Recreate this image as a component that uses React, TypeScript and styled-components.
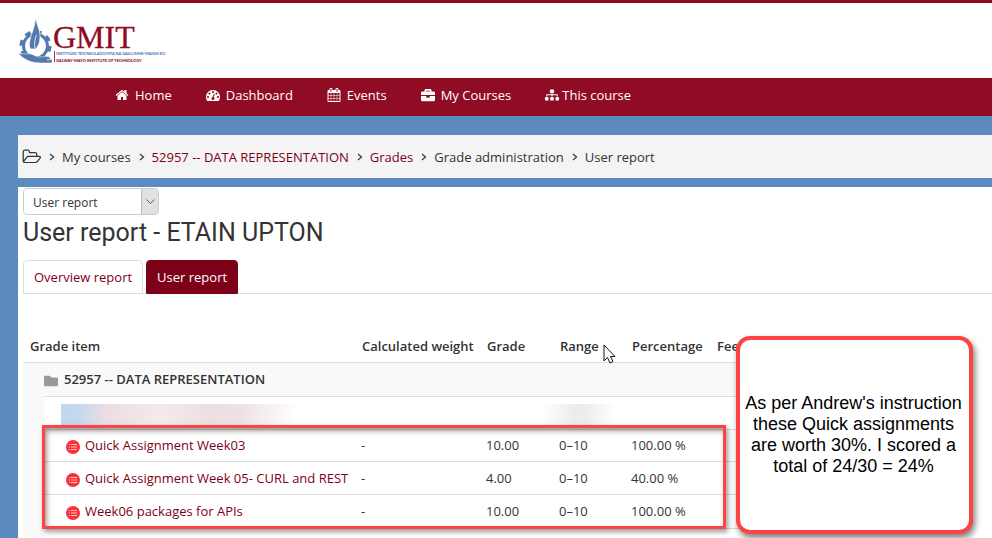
import React from "react";
import styled, { createGlobalStyle } from "styled-components";
import { FaBriefcase, FaSitemap, FaFolder } from "react-icons/fa";

const GlobalStyle = createGlobalStyle`
  * { box-sizing: border-box; }
  body {
    margin: 0;
    background: #5c8bc0;
    color: #333;
    font-family: "Open Sans", "Noto Sans", sans-serif;
    font-size: 13px;
    line-height: 20px;
  }
`;

const Page = styled.div`
  min-height: 100vh;
  display: flex;
  flex-direction: column;
  overflow: hidden;
`;

const Header = styled.header`
  height: 78px;
  padding: 15px 18px 0;
  background: #fff;
  border-top: 3px solid #900b24;
`;

const Logo = styled.svg`
  display: block;
  width: 150px;
  height: 48px;
`;

const NavBar = styled.nav`
  height: 38px;
  padding: 0 115px 4px;
  display: flex;
  align-items: center;
  gap: 34px;
  background: #900b24;
`;

const NavLink = styled.a<{ $tight?: boolean }>`
  display: flex;
  align-items: center;
  gap: ${(p) => (p.$tight ? 3 : 6)}px;
  color: #fff;
  text-decoration: none;
  svg { width: 14px; height: 14px; }
`;

const Main = styled.main`
  flex: 1;
  display: flex;
  flex-direction: column;
  gap: 9px;
  padding: 19px 0 0 18px;
`;

const Crumbs = styled.nav`
  height: 43px;
  padding: 0 4px;
  display: flex;
  align-items: center;
  background: #f4f4f4;
  & > svg { width: 19px; height: 16px; fill: #333; }
`;

const CrumbList = styled.ol`
  display: flex;
  margin: 0;
  padding: 0;
  list-style: none;
`;

const Crumb = styled.li`
  display: flex;
  align-items: center;
  svg { margin: 0 7px 0 8px; }
`;

const CrumbLink = styled.a`
  color: #7d0019;
  text-decoration: none;
`;

const Content = styled.section`
  flex: 1;
  padding: 1px 0 0 5px;
  background: #fff;
`;

const SelectBox = styled.div`
  position: relative;
  width: 136px;
  height: 27px;
`;

const Select = styled.select`
  appearance: none;
  width: 100%;
  height: 100%;
  padding: 2px 24px 0 9px;
  border: 1px solid #ccc;
  border-radius: 4px;
  background: #fff;
  color: #333;
  font: 12px "Open Sans", sans-serif;
`;

const SelectArrow = styled.span`
  position: absolute;
  inset: 1px 1px 1px auto;
  width: 17px;
  display: flex;
  align-items: center;
  justify-content: center;
  border-left: 1px solid #bbb;
  border-radius: 0 3px 3px 0;
  background: #e1e1e1;
  pointer-events: none;
`;

const Title = styled.h2`
  margin: 3px 0 12px;
  font: 400 25px/30px Roboto, sans-serif;
  color: #333;
`;

const Tabs = styled.nav`
  display: flex;
  gap: 3px;
  height: 34px;
  border-bottom: 1px solid #ddd;
`;

const Tab = styled.a<{ $active?: boolean }>`
  height: 34px;
  padding: 6px 10px;
  border: 1px solid ${(p) => (p.$active ? "#7d0019" : "#ddd")};
  border-radius: 4px 4px 0 0;
  background: ${(p) => (p.$active ? "#7d0019" : "#fff")};
  color: ${(p) => (p.$active ? "#fff" : "#7d0019")};
  text-decoration: none;
`;

const Report = styled.div`
  position: relative;
  margin: 36px 24px 0 0;
`;

const Grades = styled.table`
  width: 100%;
  table-layout: fixed;
  border-collapse: collapse;
  th, td {
    padding: 0 7px;
    text-align: left;
    white-space: nowrap;
    border-bottom: 1px solid #ddd;
  }
  thead th { height: 32px; padding-left: 8px; font-weight: 600; }
  thead th:first-child { padding-left: 7px; }
`;

const Col = styled.col<{ $w?: number }>`
  width: ${(p) => (p.$w ? `${p.$w}px` : "auto")};
`;

const Row = styled.tr<{ $h: number }>`
  height: ${(p) => p.$h}px;
`;

const Indent = styled.td`
  background: #f9f9f9;
  && { border-bottom: 0; }
`;

const Footer = styled.td`
  && { border-bottom: 0; }
`;

const Category = styled.th`
  background: #f9f9f9;
  font-weight: 600;
  && { padding-left: 0; }
  svg { width: 14px; height: 14px; margin-right: 6px; vertical-align: -4px; fill: #999; }
`;

const ItemCell = styled.th`
  font-weight: 400;
  && { padding-left: 22px; }
`;

const ItemLink = styled.a`
  color: #7d0019;
  text-decoration: none;
  svg { width: 14px; height: 14px; margin-right: 5px; vertical-align: -4px; }
`;

const Redacted = styled.div<{ $grey?: boolean }>`
  height: 24px;
  margin: ${(p) => (p.$grey ? "6px 0 0 -12px" : "6px 0 0 17px")};
  width: ${(p) => (p.$grey ? 76 : 236)}px;
  background: ${(p) =>
    p.$grey
      ? "linear-gradient(90deg, #fff, #ececec 45%, #ececec 60%, #fff)"
      : "linear-gradient(90deg, #c0d7f0, #c3d8ef 7%, #ebdde2 19%, #f4eaec 42%, #ecdfe2 62%, #ede1e5 76%, #fff)"};
`;

const BlankCell = styled.td`
  && { padding: 0; overflow: visible; }
`;

const Highlight = styled.div`
  position: absolute;
  left: 19px;
  top: 95px;
  width: 684px;
  height: 104px;
  border: 3px solid #ff4242;
  box-shadow: 2px 3px 5px rgba(0, 0, 0, 0.4), inset 2px 3px 5px rgba(0, 0, 0, 0.4);
  pointer-events: none;
`;

const Callout = styled.aside`
  position: absolute;
  left: 713px;
  top: 6px;
  width: 237px;
  height: 198px;
  padding: 0 5px 0 3px;
  display: flex;
  align-items: center;
  justify-content: center;
  border: 4px solid #ff4242;
  border-radius: 14px;
  background: #fff;
  box-shadow: 2px 4px 6px rgba(0, 0, 0, 0.5);
  color: #000;
  font: 18px/21px "Liberation Sans", Arial, sans-serif;
  text-align: center;
`;

const Pointer = styled.svg`
  position: absolute;
  left: 580px;
  top: 14px;
  width: 13px;
  height: 20px;
`;

const Icon = ({ d, box = "0 0 1792 1792" }: { d: string; box?: string }) => (
  <svg viewBox={box} fill="currentColor" aria-hidden="true">
    <path d={d} />
  </svg>
);

const HOME =
  "M1472 992v480q0 26-19 45t-45 19h-384v-384h-256v384h-384q-26 0-45-19t-19-45v-480q0-1 .5-3t.5-3l575-474 575 474q1 2 1 6zm223-69l-62 74q-8 9-21 11h-3q-13 0-21-7l-692-577-692 577q-12 8-24 7-13-2-21-11l-62-74q-8-10-7-23.5t11-21.5l719-599q32-26 76-26t76 26l244 204v-195q0-14 9-23t23-9h192q14 0 23 9t9 23v408l219 182q10 8 11 21.5t-7 23.5z";
const DASHBOARD =
  "M384 1152q0-53-37.500-90.500t-90.500-37.500-90.500 37.500-37.500 90.500 37.500 90.500 90.500 37.500 90.500-37.500 37.500-90.500zm192-448q0-53-37.500-90.500t-90.500-37.500-90.500 37.500-37.500 90.500 37.500 90.500 90.500 37.500 90.500-37.500 37.500-90.500zm428 481l101-382q6-26-7.500-48.500t-38.500-29.500-48 6.500-30 39.500l-101 382q-60 5-107 43.500t-63 98.500q-20 77 20 146t117 89 146-20 89-117q16-60-6-117t-72-91zm660-33q0-53-37.500-90.500t-90.500-37.500-90.500 37.500-37.500 90.500 37.500 90.500 90.500 37.500 90.500-37.500 37.500-90.500zm-640-640q0-53-37.500-90.500t-90.500-37.500-90.500 37.500-37.500 90.500 37.500 90.500 90.500 37.500 90.500-37.500 37.500-90.500zm448 192q0-53-37.500-90.500t-90.500-37.500-90.500 37.500-37.500 90.500 37.500 90.500 90.500 37.500 90.500-37.500 37.500-90.500zm320 448q0 261-141 483-19 29-54 29h-1402q-35 0-54-29-141-221-141-483 0-182 71-348t191-286 286-191 348-71 348 71 286 191 191 286 71 348z";
const CALENDAR =
  "M192 1664h288v-288h-288v288zm352 0h320v-288h-320v288zm-352-352h288v-320h-288v320zm352 0h320v-320h-320v320zm-352-384h288v-288h-288v288zm736 736h320v-288h-320v288zm-384-736h320v-288h-320v288zm768 736h288v-288h-288v288zm-384-352h320v-320h-320v320zm-352-864v-288q0-13-9.500-22.500t-22.500-9.500h-64q-13 0-22.500 9.500t-9.500 22.500v288q0 13 9.500 22.500t22.500 9.500h64q13 0 22.500-9.500t9.500-22.500zm736 864h288v-320h-288v320zm-384-384h320v-288h-320v288zm384 0h288v-288h-288v288zm32-480v-288q0-13-9.500-22.500t-22.500-9.500h-64q-13 0-22.500 9.500t-9.500 22.500v288q0 13 9.500 22.500t22.500 9.500h64q13 0 22.500-9.500t9.500-22.500zm384-64v1280q0 52-38 90t-90 38h-1408q-52 0-90-38t-38-90v-1280q0-52 38-90t90-38h128v-96q0-66 47-113t113-47h64q66 0 113 47t47 113v96h384v-96q0-66 47-113t113-47h64q66 0 113 47t47 113v96h128q52 0 90 38t38 90z";
const FOLDER_OPEN =
  "M1845 931q0-35-53-35h-1088q-40 0-85.500 21.500t-71.500 52.500l-294 363q-18 24-18 40 0 35 53 35h1088q40 0 86-22t71-53l294-363q18-22 18-39zm-1141-163h768v-160q0-40-28-68t-68-28h-576q-40 0-68-28t-28-68v-64q0-40-28-68t-68-28h-320q-40 0-68 28t-28 68v853l256-315q44-53 116-87.500t140-34.500zm1269 163q0 62-46 120l-295 363q-43 53-116 87.500t-140 34.500h-1088q-92 0-158-66t-66-158v-960q0-92 66-158t158-66h320q92 0 158 66t66 158v32h544q92 0 158 66t66 158v160h192q54 0 99 24.500t67 70.500q15 32 15 68z";

const Chevron = () => (
  <svg width="6" height="8" viewBox="0 0 6 8" fill="none" stroke="#444" strokeWidth="1.4" aria-hidden="true">
    <path d="M1 1l3.500 3L1 7" />
  </svg>
);

const QuizIcon = () => (
  <svg viewBox="0 0 14 14" aria-hidden="true">
    <circle cx="7" cy="7" r="7" fill="#f9313a" />
    <path d="M3 4.500h1M5 4.500h6M3 7h1M5 7h6M3 9.500h1M5 9.500h6" stroke="#ffc4c6" />
  </svg>
);

const GmitLogo = () => (
  <Logo viewBox="0 0 150 48" role="img" aria-label="GMIT">
    <circle cx="17.500" cy="28" r="14.200" fill="none" stroke="#527aae" strokeWidth="3.600" strokeDasharray="5.600 5.550" />
    <circle cx="17.500" cy="28" r="12" fill="#fff" stroke="#527aae" strokeWidth="3" />
    <path d="M12 31C9 22 16 15 17.500 0c2 8 5 13 4.500 20 0 5-2 8-4 11z" fill="#527aae" stroke="#fff" strokeWidth=".8" />
    <path d="M17 30c-1-5 0-9 1.500-13" fill="none" stroke="#fff" strokeWidth=".8" />
    <path d="M0 35c5 2 9 0 13 1s5 3 8 3c4 0 8-1 10 0 3 1 1 3-2 3l5-1v4H23c-9 0-17-3-23-10z" fill="#527aae" stroke="#fff" strokeWidth=".5" />
    <text x="35" y="30" fill="#900b24" stroke="#900b24" strokeWidth=".3" fontFamily="Liberation Serif, serif" fontSize="32">GMIT</text>
    <path d="M36.500 33v11" stroke="#900b24" strokeWidth=".8" />
    <text x="38" y="37" fill="#3e72ad" fontFamily="Lato, sans-serif" fontSize="4" fontWeight="700">INSTITIÚID TEICNEOLAÍOCHTA NA GAILLIMHE-MAIGH EO</text>
    <text x="38" y="44" fill="#900b24" fontFamily="Lato, sans-serif" fontSize="4" fontWeight="900">GALWAY-MAYO INSTITUTE OF TECHNOLOGY</text>
  </Logo>
);

const crumbs = [
  { label: "My courses" },
  { label: "52957 -- DATA REPRESENTATION", link: true },
  { label: "Grades", link: true },
  { label: "Grade administration" },
  { label: "User report" },
];

const items = [
  { name: "Quick Assignment Week03", grade: "10.00", pct: "100.00 %", h: 32 },
  { name: "Quick Assignment Week 05- CURL and REST", grade: "4.00", pct: "40.00 %", h: 33 },
  { name: "Week06 packages for APIs", grade: "10.00", pct: "100.00 %", h: 34 },
];

export default function App() {
  return (
    <Page>
      <GlobalStyle />
      <Header>
        <GmitLogo />
      </Header>
      <NavBar aria-label="Main">
        <NavLink href="#home"><Icon d={HOME} />Home</NavLink>
        <NavLink href="#dashboard"><Icon d={DASHBOARD} />Dashboard</NavLink>
        <NavLink href="#events"><Icon d={CALENDAR} box="0 0 1792 1792" />Events</NavLink>
        <NavLink href="#courses"><FaBriefcase />My Courses</NavLink>
        <NavLink href="#course" $tight><FaSitemap />This course</NavLink>
      </NavBar>
      <Main>
        <Crumbs aria-label="Breadcrumb">
          <Icon d={FOLDER_OPEN} box="0 100 1973 1600" />
          <CrumbList>
            {crumbs.map((c) => (
              <Crumb key={c.label}>
                <Chevron />
                {c.link ? <CrumbLink href="#crumb">{c.label}</CrumbLink> : c.label}
              </Crumb>
            ))}
          </CrumbList>
        </Crumbs>
        <Content>
          <SelectBox>
            <Select aria-label="Report type" defaultValue="User report">
              <option>User report</option>
              <option>Overview report</option>
            </Select>
            <SelectArrow>
              <svg width="9" height="6" viewBox="0 0 9 6" fill="none" stroke="#555" aria-hidden="true">
                <path d="M.5.5l4 4 4-4" />
              </svg>
            </SelectArrow>
          </SelectBox>
          <Title>User report - ETAIN UPTON</Title>
          <Tabs aria-label="Reports">
            <Tab href="#overview">Overview report</Tab>
            <Tab href="#user" $active aria-current="page">User report</Tab>
          </Tabs>
          <Report>
            <Grades>
              <colgroup>
                <Col $w={21} />
                <Col $w={310} />
                <Col $w={125} />
                <Col $w={73} />
                <Col $w={72} />
                <Col $w={85} />
                <Col />
              </colgroup>
              <thead>
                <tr>
                  <th colSpan={2} scope="col">Grade item</th>
                  <th scope="col">Calculated weight</th>
                  <th scope="col">Grade</th>
                  <th scope="col">Range</th>
                  <th scope="col">Percentage</th>
                  <th scope="col">Feedback</th>
                </tr>
              </thead>
              <tbody>
                <Row $h={34}>
                  <Indent rowSpan={6} />
                  <Category colSpan={6} scope="colgroup"><FaFolder />52957 -- DATA REPRESENTATION</Category>
                </Row>
                <Row $h={33}>
                  <BlankCell colSpan={3}><Redacted /></BlankCell>
                  <BlankCell colSpan={3}><Redacted $grey /></BlankCell>
                </Row>
                {items.map((item) => (
                  <Row key={item.name} $h={item.h}>
                    <ItemCell scope="row">
                      <ItemLink href="#item"><QuizIcon />{item.name}</ItemLink>
                    </ItemCell>
                    <td>-</td>
                    <td>{item.grade}</td>
                    <td>0–10</td>
                    <td>{item.pct}</td>
                    <td />
                  </Row>
                ))}
                <Row $h={9}>
                  <Footer colSpan={6} />
                </Row>
              </tbody>
            </Grades>
            <Highlight />
            <Pointer viewBox="0 0 13 20" aria-hidden="true">
              <path d="M1 1v16l3.500-3.500L7 19l3-1.500L7.500 12.500H12z" fill="#fff" stroke="#111" />
            </Pointer>
            <Callout>As per Andrew's instruction these Quick assignments are worth 30%. I scored a total of 24/30 = 24%</Callout>
          </Report>
        </Content>
      </Main>
    </Page>
  );
}
